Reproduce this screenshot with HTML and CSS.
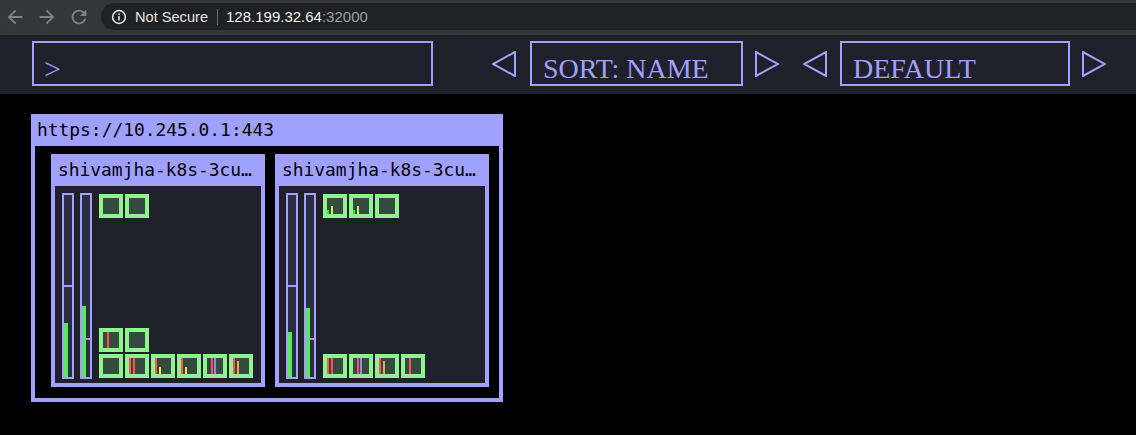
FILE: index.html
```html
<!DOCTYPE html>
<html>
<head>
<meta charset="utf-8">
<title>Kubernetes Operational View</title>
<link rel="stylesheet" href="styles.css">
</head>
<body>
<header class="chrome">
  <div class="nav">
    <svg class="navicon" viewBox="0 0 24 24"><path d="M20 11H7.83l5.59-5.59L12 4l-8 8 8 8 1.41-1.41L7.83 13H20v-2z"/></svg>
    <svg class="navicon" viewBox="0 0 24 24"><path d="M12 4l-1.41 1.41L16.17 11H4v2h12.17l-5.58 5.59L12 20l8-8z"/></svg>
    <svg class="navicon" viewBox="0 0 24 24"><path d="M17.65 6.35A7.958 7.958 0 0012 4c-4.42 0-7.99 3.58-7.99 8s3.57 8 7.99 8c3.730 0 6.840-2.550 7.730-6h-2.080A5.990 5.990 0 0112 18c-3.310 0-6-2.690-6-6s2.690-6 6-6c1.660 0 3.140.690 4.220 1.780L13 11h7V4l-2.350 2.350z"/></svg>
  </div>
  <div class="omnibox">
    <svg class="info" viewBox="0 0 16 16"><circle cx="8" cy="8" r="6.4" fill="none" stroke="#e8eaed" stroke-width="1.5"/><rect x="7.25" y="7" width="1.5" height="4.5" fill="#e8eaed"/><circle cx="8" cy="5.1" r="0.95" fill="#e8eaed"/></svg>
    <span class="secure">Not Secure</span>
    <span class="sep"></span>
    <span class="url">128.199.32.64<span class="port">:32000</span></span>
  </div>
</header>

<div class="appbar">
  <div class="filter">&gt;</div>
  <svg class="tri tri-a" viewBox="0 0 24 26"><polygon points="23,1 23,25 1,13"/></svg>
  <div class="select sort">SORT: NAME</div>
  <svg class="tri tri-b" viewBox="0 0 24 26"><polygon points="1,1 1,25 23,13"/></svg>
  <svg class="tri tri-c" viewBox="0 0 24 26"><polygon points="23,1 23,25 1,13"/></svg>
  <div class="select theme">DEFAULT</div>
  <svg class="tri tri-b" viewBox="0 0 24 26"><polygon points="1,1 1,25 23,13"/></svg>
</div>

<main class="canvas">
  <section class="cluster">
    <div class="cluster-title">https://10.245.0.1:443</div>
    <div class="cluster-body">

      <div class="node">
        <div class="node-title">shivamjha-k8s-3cu…</div>
        <div class="node-body">
          <div class="bars">
            <div class="bar"><i class="fill" style="height:54px"></i><b class="mark m-cpu"></b></div>
            <div class="bar"><i class="fill" style="height:71px"></i><b class="mark m-mem"></b></div>
          </div>
          <div class="pods">
            <div class="row">
              <div class="pod"></div>
              <div class="pod"></div>
            </div>
            <div class="stack">
              <div class="row">
                <div class="pod"><i class="red full m4"></i></div>
                <div class="pod"></div>
              </div>
              <div class="row">
                <div class="pod"></div>
                <div class="pod"><i class="red full"></i><i class="red full m2"></i></div>
                <div class="pod"><i class="red full"></i><i class="lime m2" style="height:7px"></i></div>
                <div class="pod"><i class="red full"></i><i class="lime m2" style="height:7px"></i></div>
                <div class="pod"><i class="red full m4"></i><i class="lav full m1"></i></div>
                <div class="pod"><i class="red full"></i><i class="orange m2" style="height:13px"></i></div>
              </div>
            </div>
          </div>
        </div>
      </div>

      <div class="node">
        <div class="node-title">shivamjha-k8s-3cu…</div>
        <div class="node-body">
          <div class="bars">
            <div class="bar"><i class="fill" style="height:45px"></i><b class="mark m-cpu"></b></div>
            <div class="bar"><i class="fill" style="height:69px"></i><b class="mark m-mem"></b></div>
          </div>
          <div class="pods">
            <div class="row">
              <div class="pod"><i class="green" style="height:4px"></i><i class="lime m2" style="height:8px"></i></div>
              <div class="pod"><i class="green" style="height:4px"></i><i class="lime m2" style="height:8px"></i></div>
              <div class="pod"></div>
            </div>
            <div class="stack">
              <div class="row">
                <div class="pod"><i class="red full"></i><i class="red full m2"></i></div>
                <div class="pod"><i class="red full m4"></i><i class="lav full m1"></i></div>
                <div class="pod"><i class="red full"></i><i class="orange m2" style="height:13px"></i></div>
                <div class="pod"><i class="red full m4"></i></div>
              </div>
            </div>
          </div>
        </div>
      </div>

    </div>
  </section>
</main>
</body>
</html>
```

FILE: styles.css
```css
html, body {
  margin: 0;
  padding: 0;
  background: #000;
}

body {
  width: 1136px;
  height: 435px;
  overflow: hidden;
  font-family: "Liberation Sans", Arial, sans-serif;
}

/* ---------- browser chrome ---------- */
.chrome {
  height: 35px;
  background: #35363a;
  display: flex;
  align-items: flex-start;
}

.nav {
  display: flex;
  gap: 10px;
  padding: 6px 0 0 4px;
}

.navicon {
  width: 22px;
  height: 22px;
  fill: #7f8286;
}

.omnibox {
  flex: 1;
  margin: 3px 0 0 11px;
  height: 27px;
  background: #202124;
  border-radius: 14px 0 0 14px;
  display: flex;
  align-items: center;
  padding-left: 10px;
}

.info {
  width: 16px;
  height: 16px;
  margin-top: 1px;
}

.secure {
  margin-left: 8px;
  font-size: 14.6px;
  color: #e3e3e3;
}

.sep {
  width: 1px;
  height: 16px;
  background: #6b6e72;
  margin-left: 9px;
}

.url {
  margin-left: 8px;
  font-size: 15px;
  color: #eeeeee;
}

.port {
  color: #9aa0a6;
}

/* ---------- app toolbar ---------- */
.appbar {
  height: 59px;
  background: #20202b;
  display: flex;
  align-items: flex-start;
  font-family: "Liberation Serif", "Times New Roman", serif;
  font-size: 28px;
  line-height: 27px;
  color: #a0a0ff;
}

.filter {
  box-sizing: border-box;
  width: 401px;
  height: 45px;
  margin: 6px 0 0 32px;
  border: 2px solid #a0a0ff;
  padding: 12px 0 0 10px;
  font-size: 30px;
  color: #9595f5;
}

.tri {
  width: 24px;
  height: 26px;
  margin-top: 16px;
  fill: none;
  stroke: #a0a0ff;
  stroke-width: 2;
}

.tri-a { margin-left: 59px; }
.tri-b { margin-left: 12px; }
.tri-c { margin-left: 24px; }

.select {
  box-sizing: border-box;
  height: 45px;
  margin: 6px 0 0 14px;
  border: 2px solid #a0a0ff;
  padding: 12px 0 0 11px;
  white-space: nowrap;
}

.sort { width: 213px; }
.theme { width: 230px; margin-left: 13px; }

/* ---------- canvas ---------- */
.canvas {
  padding: 20px 0 0 31px;
}

.cluster {
  width: 472px;
  box-sizing: border-box;
  background: #a0a0ff;
  padding: 0 4px 4px;
}

.cluster-title,
.node-title {
  height: 32px;
  font-family: "DejaVu Sans Mono", "Liberation Mono", monospace;
  font-size: 17.9px;
  line-height: 32px;
  color: #000;
  white-space: nowrap;
  overflow: hidden;
}

.cluster-title {
  padding-left: 2px;
}

.cluster-body {
  background: #000;
  display: flex;
  gap: 10px;
  padding: 8px 10px 11px 16px;
}

.node {
  width: 214px;
  box-sizing: border-box;
  background: #a0a0ff;
  padding: 0 4px 4px;
}

.node-title {
  padding-left: 3px;
}

.node-body {
  height: 197px;
  box-sizing: border-box;
  background: #20202a;
  display: flex;
  align-items: flex-start;
  padding: 7px 0 0 7px;
}

.bars {
  display: flex;
  gap: 6px;
}

.bar {
  position: relative;
  box-sizing: border-box;
  width: 12px;
  height: 186px;
  border: 2px solid #a0a0ff;
  background: #2b2d42;
  display: flex;
  align-items: flex-end;
}

.fill {
  display: block;
  width: 4px;
  background: #58e858;
}

.mark {
  position: absolute;
  left: 0;
  right: 0;
  height: 2px;
  background: #a0a0ff;
}

.m-cpu { top: 90px; }
.m-mem { top: 143px; }

.pods {
  height: 184px;
  margin: 1px 0 0 7px;
  display: flex;
  flex-direction: column;
  justify-content: space-between;
}

.stack {
  display: flex;
  flex-direction: column;
  gap: 2px;
}

.row {
  display: flex;
  gap: 2px;
}

.pod {
  box-sizing: border-box;
  width: 24px;
  height: 24px;
  border: 4px solid #8ef48e;
  background: #334a3e;
  display: flex;
  align-items: flex-end;
}

.pod i {
  display: block;
  width: 2px;
  flex: none;
}

.pod .full { height: 16px; }
.pod .m1 { margin-left: 1px; }
.pod .m2 { margin-left: 2px; }
.pod .m4 { margin-left: 4px; }

.red { background: #ff5252; }
.lime { background: #cdf545; }
.orange { background: #f5a052; }
.lav { background: #8c8cf2; }
.green { background: #44dd44; }
```
